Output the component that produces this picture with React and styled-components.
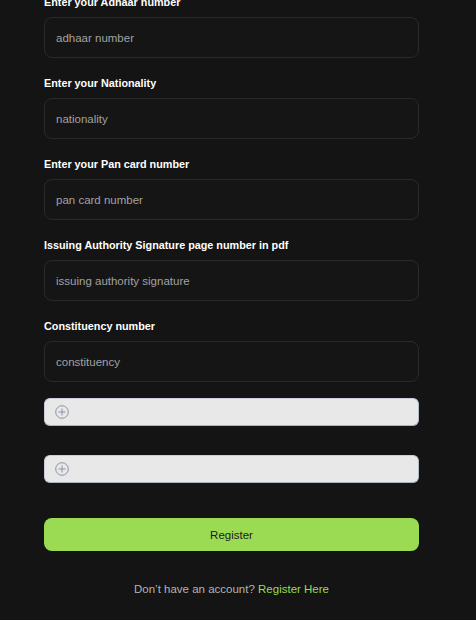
import React from "react";
import styled, { createGlobalStyle } from "styled-components";

const Global = createGlobalStyle`
  html, body { margin: 0; padding: 0; background: #141414; }
  body { font-family: "Liberation Sans", Arial, sans-serif; overflow: hidden; }
  * { box-sizing: border-box; }
`;

const Page = styled.div`
  width: 476px;
  min-height: 620px;
  background: #141414;
  padding: 0 57px 0 44px;
`;

const Form = styled.form`
  display: flex;
  flex-direction: column;
  margin-top: -5px;
`;

const Field = styled.div`
  display: flex;
  flex-direction: column;
  margin-bottom: 18px;
`;

const Label = styled.label`
  font-size: 10.8px;
  line-height: 14px;
  font-weight: 700;
  color: #ffffff;
  margin-bottom: 8px;
`;

const Input = styled.input`
  height: 41px;
  width: 100%;
  background: #151515;
  border: 1px solid #2a2a2a;
  border-radius: 8px;
  padding: 0 11px;
  font-family: inherit;
  font-size: 11.5px;
  color: #ddd;
  outline: none;
  &::placeholder { color: #a2a2a2; }
`;

const FileBox = styled.div`
  height: 28px;
  width: 100%;
  background: #e8e8e8;
  border: 1px solid #c9ced8;
  border-bottom-color: #a9b1c2;
  border-right-color: #b4bbca;
  border-radius: 6px;
  display: flex;
  align-items: center;
  padding-left: 10px;
  margin-top: ${(p) => p.$top}px;
`;

const Button = styled.button`
  margin-top: 35px;
  height: 33px;
  width: 100%;
  border: none;
  border-radius: 8px;
  background: #9bdb53;
  color: #1b1b1b;
  font-family: inherit;
  font-size: 11.5px;
`;

const Footer = styled.p`
  margin: 32px 0 0;
  text-align: center;
  font-size: 11.5px;
  color: #b3b3b3;
`;

const Link = styled.a`
  color: #9bdb53;
  text-decoration: none;
`;

const PlusIcon = () => (
  <svg width="14" height="14" viewBox="0 0 14 14" fill="none">
    <circle cx="7" cy="7" r="6.3" stroke="#8a93a6" strokeWidth="1" />
    <path d="M7 3.5v7M3.5 7h7" stroke="#8a93a6" strokeWidth="1" />
  </svg>
);

const fields = [
  ["Enter your Adhaar number", "adhaar number"],
  ["Enter your Nationality", "nationality"],
  ["Enter your Pan card number", "pan card number"],
  ["Issuing Authority Signature page number in pdf", "issuing authority signature"],
  ["Constituency number", "constituency"],
];

export default function App() {
  return (
    <>
      <Global />
      <Page>
        <Form onSubmit={(e) => e.preventDefault()}>
          {fields.map(([l, p]) => (
            <Field key={l}>
              <Label>{l}</Label>
              <Input placeholder={p} />
            </Field>
          ))}
          <FileBox $top={-2}>
            <PlusIcon />
          </FileBox>
          <FileBox $top={29}>
            <PlusIcon />
          </FileBox>
          <Button type="submit">Register</Button>
        </Form>
        <Footer>
          Don’t have an account? <Link href="#">Register Here</Link>
        </Footer>
      </Page>
    </>
  );
}
